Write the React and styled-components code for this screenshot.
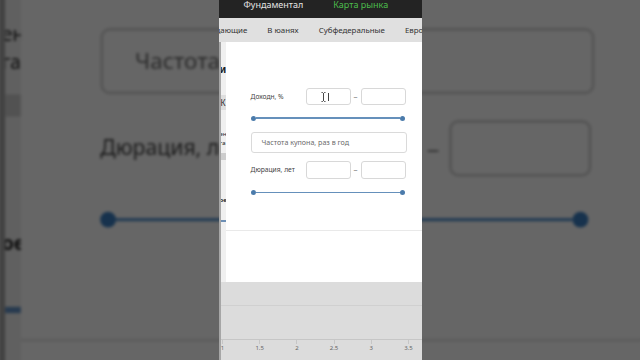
import styled, { createGlobalStyle, css } from "styled-components";

const GlobalStyle = createGlobalStyle`
  html, body {
    margin: 0;
    padding: 0;
    background: #656565;
  }
  body {
    font-family: "Noto Sans", "Open Sans", sans-serif;
  }
`;

const Stage = styled.div`
  width: 640px;
  height: 360px;
  overflow: hidden;
  display: grid;
  place-items: center;
  background: #656565;
`;

// both copies of the phone share one grid cell; the backdrop one is blown up and dimmed
const Layer = styled.div`
  grid-area: 1 / 1;
  width: 203px;
  height: 360px;
  z-index: 1;
  ${({ $backdrop }) =>
    $backdrop &&
    css`
      z-index: 0;
      transform: scale(3.17);
      transform-origin: 50% 50%;
      filter: brightness(0.4) saturate(1.4) blur(0.45px);
    `}
`;

const Screen = styled.div`
  width: 203px;
  height: 360px;
  display: flex;
  flex-direction: column;
  overflow: hidden;
  background: #dcdcdc;
  font-family: "Noto Sans", "Open Sans", sans-serif;
`;

const TopBar = styled.div`
  height: 18px;
  flex: none;
  display: flex;
  align-items: flex-start;
  gap: 30px;
  padding-left: 25px;
  background: #232323;
  font-size: 9px;
  line-height: 9px;
`;

const TopLink = styled.span`
  color: ${({ $active }) => ($active ? "#4cbb4c" : "#e4e4e4")};
  white-space: nowrap;
`;

const TabBar = styled.div`
  height: 24px;
  flex: none;
  display: flex;
  align-items: center;
  gap: 20px;
  background: #e0e0e0;
  font-size: 7.9px;
  color: #333;
  white-space: nowrap;
  & > span:first-child {
    margin-left: -3px;
  }
`;

const Body = styled.div`
  height: 240px;
  flex: none;
  display: flex;
`;

const Strip = styled.div`
  width: 5px;
  flex: none;
  display: flex;
  flex-direction: column;
  overflow: hidden;
  border-left: 2px solid #a6a6a6;
  background: #f0f0f0;
  color: #222;
  white-space: nowrap;
`;

const StripText = styled.span`
  font-size: ${({ $size }) => $size}px;
  font-weight: ${({ $bold }) => ($bold ? 700 : 400)};
  line-height: ${({ $size }) => $size + 1}px;
  margin-top: ${({ $top }) => $top}px;
  margin-left: -1px;
`;

const StripBand = styled.div`
  height: ${({ $h }) => $h}px;
  margin-top: ${({ $top }) => $top}px;
  background: ${({ $color }) => $color};
  color: #222;
  font-size: 8px;
  line-height: ${({ $h }) => $h}px;
`;

const Modal = styled.div`
  flex: 1;
  display: flex;
  flex-direction: column;
  background: #fff;
`;

const Content = styled.div`
  height: 188px;
  box-sizing: border-box;
  padding: 46px 0 0 25px;
  display: flex;
  flex-direction: column;
  align-items: flex-start;
`;

const Footer = styled.div`
  flex: 1;
  border-top: 1px solid #e9e9e9;
`;

const Row = styled.div`
  display: flex;
  align-items: center;
  height: ${({ $h }) => $h}px;
  margin-top: ${({ $top }) => $top || 0}px;
`;

const Label = styled.span`
  width: 55px;
  font-size: 6.7px;
  color: #444;
  white-space: nowrap;
`;

const Box = styled.div`
  width: 45px;
  height: 100%;
  box-sizing: border-box;
  border: 1px solid #d8d8d8;
  border-radius: 3px;
  display: flex;
  align-items: center;
  gap: 2px;
  padding-left: 14px;
`;

const Dash = styled.span`
  width: 10px;
  text-align: center;
  font-size: 8px;
  color: #8a8a8a;
`;

const Caret = styled.span`
  width: 1px;
  height: 8px;
  background: #444;
`;

const Slider = styled.div`
  width: 154px;
  height: 5px;
  margin-top: ${({ $top }) => $top}px;
  display: flex;
  align-items: center;
`;

const Thumb = styled.span`
  width: 5px;
  height: 5px;
  flex: none;
  border-radius: 50%;
  background: #4b7bab;
`;

const Track = styled.span`
  flex: 1;
  height: 1.5px;
  background: #6590bb;
`;

const Field = styled.div`
  width: 156px;
  height: 21px;
  margin-top: ${({ $top }) => $top}px;
  box-sizing: border-box;
  border: 1px solid #dadada;
  border-radius: 3px;
  padding-left: 10px;
  display: flex;
  align-items: center;
  font-size: 7.1px;
  color: #6a6a6a;
  white-space: nowrap;
`;

const Chart = styled.div`
  flex: 1;
  display: flex;
  flex-direction: column;
  border-left: 2px solid #a6a6a6;
  background: #dcdcdc;
`;

const GridLine = styled.div`
  height: 1px;
  margin-top: ${({ $top }) => $top}px;
  background: ${({ $strong }) => ($strong ? "#c6c6c6" : "#d0d0d0")};
`;

const Ticks = styled.div`
  display: grid;
  grid-template-columns: repeat(6, 37.2px);
  margin-left: -16.6px;
`;

const Tick = styled.div`
  display: flex;
  flex-direction: column;
  align-items: center;
  font-size: 6px;
  line-height: 7px;
  color: #666;
  &::before {
    content: "";
    width: 1px;
    height: 4px;
    margin-bottom: 1px;
    background: #c6c6c6;
  }
`;

function IBeam() {
  return (
    <svg width="5" height="10" viewBox="0 0 5 10">
      <path d="M0.5 0.5h1.3M3.2 0.5h1.3M2.5 1v8M0.5 9.5h1.3M3.2 9.5h1.3" stroke="#333" strokeWidth="0.9" fill="none" />
    </svg>
  );
}

function RangeRow({ label, top, h, cursor }) {
  return (
    <Row $top={top} $h={h}>
      <Label>{label}</Label>
      <Box>
        {cursor && (
          <>
            <IBeam />
            <Caret />
          </>
        )}
      </Box>
      <Dash>–</Dash>
      <Box />
    </Row>
  );
}

function RangeSlider({ top }) {
  return (
    <Slider $top={top}>
      <Thumb />
      <Track />
      <Thumb />
    </Slider>
  );
}

function Phone() {
  return (
    <Screen>
      <TopBar>
        <TopLink>Фундаментал</TopLink>
        <TopLink $active>Карта рынка</TopLink>
      </TopBar>
      <TabBar>
        <span>дающие</span>
        <span>В юанях</span>
        <span>Субфедеральные</span>
        <span>Евро</span>
      </TabBar>
      <Body>
        <Strip>
          <StripText $size={10} $bold $top={22}>и</StripText>
          <StripBand $h={15} $top={20} $color="#dedede">К</StripBand>
          <StripText $size={6} $top={21}>ен</StripText>
          <StripText $size={6} $top={2}>га</StripText>
          <StripBand $h={7} $top={6} $color="#cdcdcd" />
          <StripText $size={6} $bold $top={37}>ое</StripText>
          <StripBand $h={2} $top={16} $color="#6d8fb5" />
        </Strip>
        <Modal>
          <Content>
            <RangeRow label="Доходн, %" h={17} cursor />
            <RangeSlider top={10.5} />
            <Field $top={11}>Частота купона, раз в год</Field>
            <RangeRow label="Дюрация, лет" h={18} top={8} />
            <RangeSlider top={11.5} />
          </Content>
          <Footer />
        </Modal>
      </Body>
      <Chart>
        <GridLine $top={23} />
        <GridLine $top={33} $strong />
        <Ticks>
          {["1", "1.5", "2", "2.5", "3", "3.5"].map((t) => (
            <Tick key={t}>{t}</Tick>
          ))}
        </Ticks>
      </Chart>
    </Screen>
  );
}

export default function App() {
  return (
    <>
      <GlobalStyle />
      <Stage>
        <Layer $backdrop aria-hidden="true">
          <Phone />
        </Layer>
        <Layer>
          <Phone />
        </Layer>
      </Stage>
    </>
  );
}
